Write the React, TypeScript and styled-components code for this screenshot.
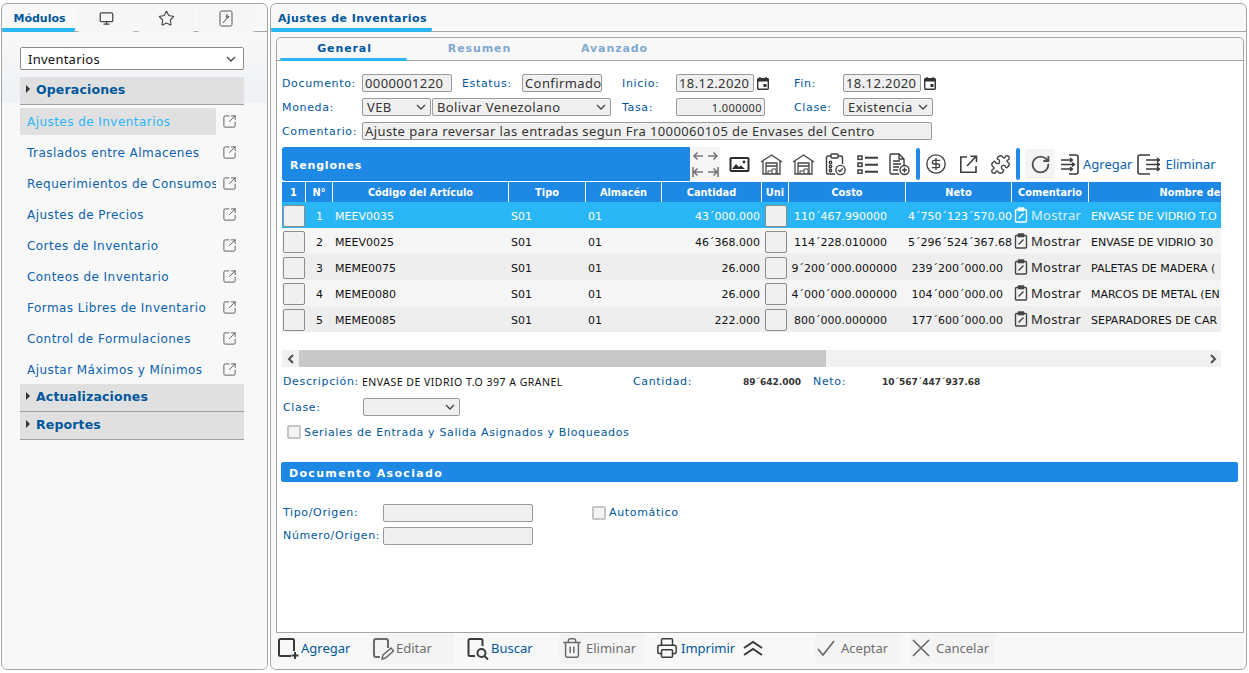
import styled, { createGlobalStyle } from 'styled-components';
import { CircleDollarSign, Monitor, Printer, Puzzle, RotateCw, SquareArrowOutUpRight, Star, Trash2 } from 'lucide-react';

const GlobalStyle = createGlobalStyle`
	html, body {
		margin: 0;
		width: 1249px;
		height: 673px;
		overflow: hidden;
		background: #ffffff;
		font-family: "DejaVu Sans", Verdana, sans-serif;
	}
	* { box-sizing: border-box; }
`;

const Page = styled.div`
	display: flex;
	gap: 2px;
	padding: 3px 1px;
	height: 673px;
`;

const Panel = styled.section<{ $width: number }>`
	display: flex;
	flex-direction: column;
	width: ${(p) => p.$width}px;
	height: 667px;
	border: 1px solid #a6a6a6;
	border-radius: 6px;
	background: #f8f8f8;
	overflow: hidden;
`;

const TabBar = styled.div`
	display: flex;
	flex: none;
	height: 28px;
	border-bottom: 1px solid #a6a6a6;
`;

const PanelTab = styled.div<{ $width: number; $active?: boolean; $spacing?: number }>`
	display: flex;
	align-items: center;
	justify-content: center;
	width: ${(p) => p.$width}px;
	height: 28px;
	padding: 4px 0 0 ${(p) => (p.$active ? 2 : 0)}px;
	margin-right: 2px;
	font-size: 11px;
	font-weight: 700;
	letter-spacing: ${(p) => p.$spacing ?? 0}px;
	color: #01579b;
	border-bottom: 4px solid ${(p) => (p.$active ? '#29b6f6' : 'transparent')};
	border-radius: 0 0 3px 3px;
	background: ${(p) => (p.$active ? 'transparent' : '#f6f6f6')};
`;

const SideBody = styled.div`
	flex: 1;
	padding: 15px 23px 0 18px;
	background: linear-gradient(#f8f8f8 0, #eef2f6 70px, #f8f8f8 71px);
`;

const ModuleSelect = styled.div`
	display: flex;
	align-items: center;
	justify-content: space-between;
	height: 23px;
	padding: 0 7px 0 7px;
	margin-bottom: 7px;
	background: #ffffff;
	border: 1px solid #8a8a8a;
	border-radius: 2px;
	font-family: "Noto Sans", sans-serif;
	font-size: 13px;
	letter-spacing: 0.25px;
	color: #111111;
`;

const GroupHeader = styled.div`
	display: flex;
	align-items: center;
	gap: 6px;
	height: 28px;
	padding: 0 0 3px 6px;
	background: #e0e0e0;
	border-bottom: 1px solid #a0a0a0;
	font-size: 12.5px;
	font-weight: 700;
	letter-spacing: 0.15px;
	color: #01579b;
`;

const Caret = styled.span`
	width: 0;
	height: 0;
	border-left: 4px solid #333333;
	border-top: 4px solid transparent;
	border-bottom: 4px solid transparent;
`;

const MenuList = styled.div`
	display: flex;
	flex-direction: column;
	gap: 4px;
	padding: 3px 0 1px;
`;

const MenuRow = styled.div`
	display: flex;
	align-items: center;
	height: 27px;
	color: #5b5b5b;
`;

const MenuLabel = styled.div<{ $active?: boolean }>`
	width: 196px;
	height: 27px;
	padding-left: 7px;
	margin-right: 6px;
	line-height: 29px;
	font-size: 12px;
	letter-spacing: 0.45px;
	white-space: nowrap;
	overflow: hidden;
	border-radius: 2px;
	color: ${(p) => (p.$active ? '#29b6f6' : '#0b62ad')};
	background: ${(p) => (p.$active ? '#e0e0e0' : 'transparent')};
`;

const MainBody = styled.div`
	flex: 1;
	display: flex;
	flex-direction: column;
	padding: 5px 2px 0 5px;
	min-height: 0;
`;

const Sheet = styled.div`
	flex: none;
	height: 596px;
	background: #ffffff;
	border: 1px solid #a6a6a6;
	border-radius: 5px 5px 0 0;
`;

const SheetTabs = styled.div`
	display: flex;
	height: 23px;
	padding-left: 3px;
	border-bottom: 1px solid #a6a6a6;
	background: #f8f8f8;
	border-radius: 5px 5px 0 0;
`;

const SheetTab = styled.div<{ $active?: boolean }>`
	display: flex;
	align-items: center;
	justify-content: center;
	width: 127px;
	height: 23px;
	margin-right: 8px;
	padding: 1px 0 0 2px;
	font-size: 11px;
	font-weight: 700;
	letter-spacing: 0.9px;
	color: ${(p) => (p.$active ? '#01579b' : '#7fa8cf')};
	border-bottom: 3px solid ${(p) => (p.$active ? '#29b6f6' : 'transparent')};
	border-radius: 0 0 3px 3px;
`;

const SheetContent = styled.div`
	padding: 10px 4px 0 5px;
`;

const FormRow = styled.div`
	display: grid;
	grid-template-columns: 80px 100px 60px 100px 54px 118px 49px 100px;
	align-items: center;
	height: 24px;
`;

const FieldLabel = styled.span`
	font-size: 11px;
	letter-spacing: 0.65px;
	color: #01579b;
	white-space: nowrap;
`;

const TextField = styled.div<{ $width: number; $right?: boolean; $small?: boolean }>`
	display: flex;
	align-items: center;
	justify-content: ${(p) => (p.$right ? 'flex-end' : 'flex-start')};
	width: ${(p) => p.$width}px;
	height: 18px;
	padding: 0 2px;
	background: #f0f0f0;
	border: 1px solid #9a9a9a;
	border-radius: 2px;
	font-family: "Noto Sans", sans-serif;
	font-size: ${(p) => (p.$small ? 11 : 13)}px;
	letter-spacing: 0.4px;
	color: #333333;
	white-space: nowrap;
	overflow: hidden;
`;

const SelectField = styled(TextField)`
	justify-content: space-between;
	padding: 0 4px;
	color: #333333;
`;

const DateCell = styled.div`
	display: flex;
	align-items: center;
	gap: 2px;
`;

const SpanCell = styled.div<{ $span: number }>`
	display: flex;
	gap: 1px;
	grid-column: span ${(p) => p.$span};
`;

const BandRow = styled.div`
	display: flex;
	align-items: stretch;
	height: 34px;
	margin-top: 4px;
`;

const Band = styled.div`
	display: flex;
	align-items: center;
	width: 408px;
	padding: 2px 0 0 8px;
	background: #1e88e5;
	border-radius: 3px 0 0 3px;
	font-size: 11px;
	font-weight: 700;
	letter-spacing: 0.8px;
	color: #ffffff;
`;

const ArrowPad = styled.div`
	display: grid;
	grid-template-columns: 15px 15px;
	grid-template-rows: 16px 16px;
	place-items: center;
	align-content: center;
	width: 30px;
	background: #f5f5f5;
	color: #777777;
	margin-right: 3px;
`;

const ToolIcon = styled.div<{ $hover?: boolean; $width?: number; $left?: number }>`
	display: flex;
	align-items: center;
	justify-content: center;
	width: ${(p) => p.$width ?? 32}px;
	height: 30px;
	margin: 2px 0 0 ${(p) => p.$left ?? 0}px;
	color: #424242;
	background: ${(p) => (p.$hover ? '#f4f4f4' : 'transparent')};
`;

const ToolSep = styled.div`
	width: 4px;
	margin: 1px 0;
	background: #1e88e5;
	border-radius: 2px;
`;

const ToolText = styled.span`
	align-self: center;
	font-family: "Noto Sans", sans-serif;
	font-size: 13px;
	color: #0b62ad;
`;

const TableClip = styled.div`
	width: 939px;
	margin-top: 1px;
	overflow: hidden;
`;

const Grid = styled.table`
	width: 1060px;
	table-layout: fixed;
	border-collapse: separate;
	border-spacing: 0;
`;

const HeadCell = styled.th`
	height: 20px;
	padding: 0;
	background: #1e88e5;
	border-right: 1px solid #ffffff;
	font-size: 9.8px;
	font-weight: 700;
	color: #ffffff;
	white-space: nowrap;
	overflow: hidden;
`;

const Row = styled.tr<{ $bg: string; $selected?: boolean }>`
	background: ${(p) => p.$bg};
	color: ${(p) => (p.$selected ? '#ffffff' : '#111111')};
`;

const Cell = styled.td<{ $align?: string; $padRight?: number; $padLeft?: number }>`
	height: 26px;
	padding: 2px ${(p) => p.$padRight ?? 2}px 0 ${(p) => p.$padLeft ?? 2}px;
	text-align: ${(p) => p.$align ?? 'left'};
	font-size: 11px;
	white-space: nowrap;
	overflow: hidden;
`;

const SquareButton = styled.div<{ $width: number }>`
	width: ${(p) => p.$width}px;
	height: 22px;
	margin: -1px auto 0;
	background: #f0f0f0;
	border: 1px solid #8c8c8c;
	border-radius: 2px;
`;

const NoteCell = styled.div<{ $selected?: boolean }>`
	display: flex;
	align-items: center;
	gap: 3px;
	margin-top: -2px;
	font-family: "Noto Sans", sans-serif;
	font-size: 13px;
	letter-spacing: 0.25px;
	color: ${(p) => (p.$selected ? '#d9f1fd' : '#222222')};
`;

const ScrollBar = styled.div`
	display: flex;
	width: 939px;
	height: 17px;
	margin-top: 18px;
	background: #f1f1f1;
	color: #505050;
`;

const ScrollEnd = styled.div`
	display: flex;
	align-items: center;
	justify-content: center;
	width: 17px;
`;

const ScrollThumb = styled.div`
	width: 527px;
	background: #c8c8c8;
`;

const ScrollRest = styled.div`
	flex: 1;
`;

const SummaryRow = styled.div`
	display: grid;
	grid-template-columns: 79px 271px 110px 70px 69px 1fr;
	align-items: center;
	height: 27px;
	margin-top: 1px;
	padding-left: 1px;
`;

const SummaryText = styled.span`
	font-family: "Noto Sans", sans-serif;
	font-size: 10.5px;
	letter-spacing: 0.5px;
	color: #111111;
	white-space: nowrap;
`;

const SummaryNumber = styled.span`
	font-size: 9px;
	font-weight: 700;
	color: #333333;
	white-space: nowrap;
`;

const RightNumber = styled(SummaryNumber)`
	text-align: right;
	margin-right: 18px;
`;

const ClassRow = styled.div`
	display: grid;
	grid-template-columns: 80px 1fr;
	align-items: center;
	height: 24px;
	padding-left: 1px;
`;

const CheckRow = styled.label<{ $left: number; $top?: number }>`
	display: flex;
	align-items: center;
	gap: 3px;
	margin: ${(p) => p.$top ?? 0}px 0 0 ${(p) => p.$left}px;
`;

const CheckBox = styled.span`
	width: 14px;
	height: 14px;
	background: #f4f4f4;
	border: 2px solid #c6c6c6;
	border-radius: 2px;
`;

const SectionBand = styled.div`
	display: flex;
	align-items: center;
	width: 957px;
	height: 20px;
	margin: 23px 0 0 -1px;
	padding: 3px 0 0 8px;
	background: #1e88e5;
	border-radius: 2px;
	font-size: 11px;
	font-weight: 700;
	letter-spacing: 1.33px;
	color: #ffffff;
`;

const OriginGrid = styled.div`
	display: grid;
	grid-template-columns: 100px 209px auto;
	grid-auto-rows: 23px;
	align-items: center;
	margin-top: 19px;
	padding-left: 1px;
`;

const Footer = styled.div`
	flex: 1;
	display: flex;
	align-items: flex-start;
	padding-top: 1px;
`;

const FootButton = styled.div<{ $width: number; $disabled?: boolean; $gap?: number }>`
	display: flex;
	align-items: center;
	gap: ${(p) => p.$gap ?? 2}px;
	width: ${(p) => p.$width}px;
	height: 30px;
	padding: 0 0 2px 2px;
	border-radius: 2px;
	font-family: "Noto Sans", sans-serif;
	font-size: 13px;
	color: ${(p) => (p.$disabled ? '#6e6e6e' : '#01579b')};
	background: ${(p) => (p.$disabled ? '#f4f4f4' : 'transparent')};
	svg { color: ${(p) => (p.$disabled ? '#6a6a6a' : '#3a3a3a')}; flex: none; }
`;

const FootSpacer = styled.div<{ $width: number }>`
	flex: none;
	width: ${(p) => p.$width}px;
`;

const CalendarIcon = () => (
	<svg width="14" height="15" viewBox="0 0 14 15" fill="none">
		<rect x="1.7" y="2.7" width="10.6" height="10.6" rx="1" stroke="#333" strokeWidth="1.4" />
		<path d="M1.5 2.5h11v3h-11z" fill="#333" />
		<path d="M4 1v2M10 1v2" stroke="#333" strokeWidth="1.4" />
		<rect x="7.5" y="8" width="3" height="3" fill="#333" />
	</svg>
);

const Chevron = () => (
	<svg width="10" height="6" viewBox="0 0 10 6" fill="none">
		<path d="M1 1l4 4 4-4" stroke="#444" strokeWidth="1.3" />
	</svg>
);

const WrenchBox = () => (
	<svg width="14" height="17" viewBox="0 0 14 17" fill="none" stroke="#555" strokeWidth="1">
		<rect x="1" y="1" width="12" height="15" rx="1.5" />
		<path d="M4 13l4-5M8 8a2 2 0 0 1 .5-3.5L7.6 6l1 1 1.4-1A2 2 0 0 1 8 8z" />
	</svg>
);

const ImageIcon = () => (
	<svg width="21" height="17" viewBox="0 0 21 17">
		<rect x="0.5" y="1" width="20" height="15" rx="2" fill="#2b2b2b" />
		<rect x="2.5" y="3" width="16" height="11" fill="#ffffff" />
		<path d="M3 13l4-5 3 3 2-1.5 4 3.5z" fill="#2b2b2b" />
		<circle cx="15" cy="6" r="1.4" fill="#2b2b2b" />
	</svg>
);

const WarehouseIcon = () => (
	<svg width="23" height="21" viewBox="0 0 23 21" fill="none" stroke="#444" strokeWidth="1.3">
		<path d="M1 8l10.5-7L22 8" />
		<path d="M3 7v13h17V7" />
		<path d="M6 20V9h11v11M6 12h11" />
		<path d="M12 20v-5h4v5M8 20v-3h4" strokeWidth="1" />
	</svg>
);

const ClipboardIcon = () => (
	<svg width="21" height="23" viewBox="0 0 21 23" fill="none" stroke="#3c3c3c" strokeWidth="1.4">
		<path d="M6 3H3a1.5 1.5 0 0 0-1.5 1.5v15A1.5 1.5 0 0 0 3 21h7M13 3h3a1.5 1.5 0 0 1 1.5 1.5V11" />
		<rect x="6" y="1" width="7" height="4" rx="1" />
		<circle cx="5.5" cy="9.5" r="1.2" />
		<circle cx="5.5" cy="13.5" r="1.2" />
		<circle cx="5.5" cy="17.5" r="1.2" />
		<circle cx="15.5" cy="17" r="4.6" />
		<path d="M13.3 17l1.6 1.6 2.8-3" />
	</svg>
);

const ListIcon = () => (
	<svg width="21" height="19" viewBox="0 0 21 19" fill="none" stroke="#3c3c3c" strokeWidth="1.5">
		<rect x="1" y="1" width="4" height="3.4" />
		<rect x="1" y="8" width="4" height="3.4" />
		<rect x="1" y="15" width="4" height="3.4" />
		<path d="M8 2.7h13M8 9.7h13M8 16.7h13" strokeWidth="2" />
	</svg>
);

const FilePlusIcon = () => (
	<svg width="21" height="23" viewBox="0 0 21 23" fill="none" stroke="#3c3c3c" strokeWidth="1.4">
		<path d="M10 21H2.5A1.5 1.5 0 0 1 1 19.5v-17A1.5 1.5 0 0 1 2.5 1H10l5 5v6" />
		<path d="M10 1v5h5M4 8h7M4 11h8M4 14h6M4 17h5" />
		<circle cx="15.5" cy="17" r="4.5" />
		<path d="M15.5 14.5v5M13 17h5" />
	</svg>
);

const ExternalIcon = () => (
	<svg width="19" height="19" viewBox="0 0 19 19" fill="none" stroke="#3c3c3c" strokeWidth="1.6">
		<path d="M8 2H1.8v15.2H17V11" />
		<path d="M8 11l9-9.5M11.5 1.2h6v6" />
	</svg>
);

const LoginIcon = () => (
	<svg width="19" height="21" viewBox="0 0 19 21" fill="none" stroke="#3a3a3a" strokeWidth="1.6">
		<path d="M9 1h7a2 2 0 0 1 2 2v15a2 2 0 0 1-2 2H9" />
		<path d="M1 6h11M1 10.5h13M1 15h11M10 4l2.5 2L10 8M12 8.5l2.5 2-2.5 2M10 13l2.5 2-2.5 2" strokeWidth="1.4" />
	</svg>
);

const LogoutIcon = () => (
	<svg width="23" height="21" viewBox="0 0 23 21" fill="none" stroke="#3a3a3a" strokeWidth="1.6">
		<path d="M13 1H3a2 2 0 0 0-2 2v15a2 2 0 0 0 2 2h10" />
		<path d="M9 6h13M9 10.5h13M9 15h13M20 4l2.500 2L20 8M20 8.500l2.500 2-2.500 2M20 13l2.500 2-2.500 2" strokeWidth="1.400" />
	</svg>
);

const ArrowGlyph = ({ d }: { d: string }) => (
	<svg width="14" height="14" viewBox="0 0 14 14" fill="none" stroke="currentColor" strokeWidth="1.6">
		<path d={d} />
	</svg>
);

const AddPageIcon = () => (
	<svg width="23" height="24" viewBox="0 0 23 24" fill="none" stroke="currentColor" strokeWidth="2">
		<path d="M13 20H2.500A1.500 1.500 0 0 1 1 18.500V4.500A1.500 1.500 0 0 1 2.500 3h12A1.500 1.500 0 0 1 16 4.500V15" />
		<path d="M17 16v7M13.500 19.500h7" />
	</svg>
);

const EditPageIcon = () => (
	<svg width="24" height="24" viewBox="0 0 24 24" fill="none" stroke="currentColor" strokeWidth="2">
		<path d="M9 21H5a2 2 0 0 1-2-2V5a2 2 0 0 1 2-2h10a2 2 0 0 1 2 2v7" />
		<path d="M11 23l1-4 8-7 2.500 3-8 7z" strokeWidth="1.500" />
	</svg>
);

const SearchPageIcon = () => (
	<svg width="24" height="24" viewBox="0 0 24 24" fill="none" stroke="currentColor" strokeWidth="2">
		<path d="M9 20H4a1.500 1.500 0 0 1-1.500-1.500v-14A1.500 1.500 0 0 1 4 3h11a1.500 1.500 0 0 1 1.500 1.500V10" />
		<circle cx="15.500" cy="17" r="4" />
		<path d="M18.500 20l3.500 3.500" />
	</svg>
);

const NoteIcon = ({ color }: { color: string }) => (
	<svg width="14" height="16" viewBox="0 0 14 16" fill="none" stroke={color} strokeWidth="1.400">
		<rect x="1.500" y="2.500" width="11" height="12.500" rx="1" />
		<rect x="4.500" y="1" width="5" height="2.600" fill={color} />
		<path d="M4.500 11.500l5-5" />
	</svg>
);

const CollapseIcon = () => (
	<svg width="20" height="16" viewBox="0 0 20 16" fill="none" stroke="currentColor" strokeWidth="2">
		<path d="M1 8l9-6 9 6M1 15l9-6 9 6" />
	</svg>
);

const AcceptIcon = () => (
	<svg width="18" height="16" viewBox="0 0 18 16" fill="none" stroke="currentColor" strokeWidth="1.7">
		<path d="M1 9l5 6L17 1" />
	</svg>
);

const CancelIcon = () => (
	<svg width="18" height="18" viewBox="0 0 18 18" fill="none" stroke="currentColor" strokeWidth="1.7">
		<path d="M1 1l16 16M17 1L1 17" />
	</svg>
);

const menuItems = ['Ajustes de Inventarios', 'Traslados entre Almacenes', 'Requerimientos de Consumos', 'Ajustes de Precios', 'Cortes de Inventario', 'Conteos de Inventario', 'Formas Libres de Inventario', 'Control de Formulaciones', 'Ajustar Máximos y Mínimos'];

const columns: { title: string; width: number }[] = [
	{ title: '1', width: 24 },
	{ title: 'N°', width: 27 },
	{ title: 'Código del Artículo', width: 176 },
	{ title: 'Tipo', width: 77 },
	{ title: 'Almacén', width: 76 },
	{ title: 'Cantidad', width: 100 },
	{ title: 'Uni', width: 27 },
	{ title: 'Costo', width: 117 },
	{ title: 'Neto', width: 106 },
	{ title: 'Comentario', width: 77 },
	{ title: 'Nombre del Artículo', width: 253 }
];

const rows = [
	{ id: 1, code: 'MEEV0035', qty: '43´000.000', cost: '110´467.990000', costPad: 19, net: '4´750´123´570.00', netPad: 0, name: 'ENVASE DE VIDRIO T.O 397 A GRANEL', bg: '#29b6f6' },
	{ id: 2, code: 'MEEV0025', qty: '46´368.000', cost: '114´228.010000', costPad: 19, net: '5´296´524´367.68', netPad: 0, name: 'ENVASE DE VIDRIO 30', bg: '#f5f5f5' },
	{ id: 3, code: 'MEME0075', qty: '26.000', cost: '9´200´000.000000', costPad: 9, net: '239´200´000.00', netPad: 9, name: 'PALETAS DE MADERA (', bg: '#eeeeee' },
	{ id: 4, code: 'MEME0080', qty: '26.000', cost: '4´000´000.000000', costPad: 9, net: '104´000´000.00', netPad: 9, name: 'MARCOS DE METAL (EN', bg: '#f5f5f5' },
	{ id: 5, code: 'MEME0085', qty: '222.000', cost: '800´000.000000', costPad: 19, net: '177´600´000.00', netPad: 9, name: 'SEPARADORES DE CAR', bg: '#eeeeee' }
];

const App = () => (
	<Page>
		<GlobalStyle />
		<Panel $width={267}>
			<TabBar>
				<PanelTab $width={73} $active>Módulos</PanelTab>
				<PanelTab $width={58}><Monitor size={15} color="#444" strokeWidth={2} /></PanelTab>
				<PanelTab $width={58}><Star size={17} color="#444" strokeWidth={1.6} /></PanelTab>
				<PanelTab $width={58}><WrenchBox /></PanelTab>
			</TabBar>
			<SideBody>
				<ModuleSelect>Inventarios<Chevron /></ModuleSelect>
				<GroupHeader><Caret />Operaciones</GroupHeader>
				<MenuList>
					{menuItems.map((item, i) => (
						<MenuRow key={item}>
							<MenuLabel $active={i === 0}>{item}</MenuLabel>
							<SquareArrowOutUpRight size={15} strokeWidth={1.5} />
						</MenuRow>
					))}
				</MenuList>
				<GroupHeader><Caret />Actualizaciones</GroupHeader>
				<GroupHeader><Caret />Reportes</GroupHeader>
			</SideBody>
		</Panel>
		<Panel $width={977}>
			<TabBar>
				<PanelTab $width={161} $active $spacing={0.45}>Ajustes de Inventarios</PanelTab>
			</TabBar>
			<MainBody>
				<Sheet>
					<SheetTabs>
						<SheetTab $active>General</SheetTab>
						<SheetTab>Resumen</SheetTab>
						<SheetTab>Avanzado</SheetTab>
					</SheetTabs>
					<SheetContent>
						<FormRow>
							<FieldLabel>Documento:</FieldLabel>
							<TextField $width={90}>0000001220</TextField>
							<FieldLabel>Estatus:</FieldLabel>
							<TextField $width={80}>Confirmado</TextField>
							<FieldLabel>Inicio:</FieldLabel>
							<DateCell><TextField $width={78}>18.12.2020</TextField><CalendarIcon /></DateCell>
							<FieldLabel>Fin:</FieldLabel>
							<DateCell><TextField $width={78}>18.12.2020</TextField><CalendarIcon /></DateCell>
						</FormRow>
						<FormRow>
							<FieldLabel>Moneda:</FieldLabel>
							<SpanCell $span={3}>
								<SelectField $width={69}>VEB<Chevron /></SelectField>
								<SelectField $width={179}>Bolivar Venezolano<Chevron /></SelectField>
							</SpanCell>
							<FieldLabel>Tasa:</FieldLabel>
							<TextField $width={89} $right $small>1.000000</TextField>
							<FieldLabel>Clase:</FieldLabel>
							<SelectField $width={90}>Existencia<Chevron /></SelectField>
						</FormRow>
						<FormRow>
							<FieldLabel>Comentario:</FieldLabel>
							<SpanCell $span={7}>
								<TextField $width={570}>Ajuste para reversar las entradas segun Fra 1000060105 de Envases del Centro</TextField>
							</SpanCell>
						</FormRow>
						<BandRow>
							<Band>Renglones</Band>
							<ArrowPad>
								<ArrowGlyph d="M12 7H3M6.5 3.5L3 7l3.500 3.500" />
								<ArrowGlyph d="M2 7h9M7.500 3.500L11 7l-3.500 3.500" />
								<ArrowGlyph d="M2 2v10M12 7H3M6.500 3.500L3 7l3.500 3.500" />
								<ArrowGlyph d="M12 2v10M2 7h9M7.500 3.500L11 7l-3.500 3.500" />
							</ArrowPad>
							<ToolIcon><ImageIcon /></ToolIcon>
							<ToolIcon><WarehouseIcon /></ToolIcon>
							<ToolIcon><WarehouseIcon /></ToolIcon>
							<ToolIcon><ClipboardIcon /></ToolIcon>
							<ToolIcon><ListIcon /></ToolIcon>
							<ToolIcon $width={33}><FilePlusIcon /></ToolIcon>
							<ToolSep />
							<ToolIcon><CircleDollarSign size={22} strokeWidth={1.5} /></ToolIcon>
							<ToolIcon><ExternalIcon /></ToolIcon>
							<ToolIcon><Puzzle size={21} strokeWidth={1.6} /></ToolIcon>
							<ToolSep />
							<ToolIcon $hover $width={30} $left={5}><RotateCw size={21} strokeWidth={2.2} color="#555" /></ToolIcon>
							<ToolIcon $width={28}><LoginIcon /></ToolIcon>
							<ToolText>Agregar</ToolText>
							<ToolIcon $width={33}><LogoutIcon /></ToolIcon>
							<ToolText>Eliminar</ToolText>
						</BandRow>
						<TableClip>
							<Grid>
								<colgroup>
									{columns.map((c) => <col key={c.title} width={c.width} />)}
								</colgroup>
								<thead>
									<tr>
										{columns.map((c) => <HeadCell key={c.title}>{c.title}</HeadCell>)}
									</tr>
								</thead>
								<tbody>
									{rows.map((r, i) => (
										<Row key={r.id} $bg={r.bg} $selected={i === 0}>
											<Cell $padLeft={1} $padRight={1}><SquareButton $width={22} /></Cell>
											<Cell $align="center">{r.id}</Cell>
											<Cell>{r.code}</Cell>
											<Cell>S01</Cell>
											<Cell>01</Cell>
											<Cell $align="right">{r.qty}</Cell>
											<Cell><SquareButton $width={22} /></Cell>
											<Cell $align="right" $padRight={r.costPad}>{r.cost}</Cell>
											<Cell $align="right" $padRight={r.netPad}>{r.net}</Cell>
											<Cell>
												<NoteCell $selected={i === 0}>
													<NoteIcon color={i === 0 ? '#ffffff' : '#444444'} />Mostrar
												</NoteCell>
											</Cell>
											<Cell>{r.name}</Cell>
										</Row>
									))}
								</tbody>
							</Grid>
						</TableClip>
						<ScrollBar>
							<ScrollEnd><svg width="8" height="10" viewBox="0 0 8 10" fill="none" stroke="currentColor" strokeWidth="2"><path d="M6 1L2 5l4 4" /></svg></ScrollEnd>
							<ScrollThumb />
							<ScrollRest />
							<ScrollEnd><svg width="8" height="10" viewBox="0 0 8 10" fill="none" stroke="currentColor" strokeWidth="2"><path d="M2 1l4 4-4 4" /></svg></ScrollEnd>
						</ScrollBar>
						<SummaryRow>
							<FieldLabel>Descripción:</FieldLabel>
							<SummaryText>ENVASE DE VIDRIO T.O 397 A GRANEL</SummaryText>
							<FieldLabel>Cantidad:</FieldLabel>
							<RightNumber>89´642.000</RightNumber>
							<FieldLabel>Neto:</FieldLabel>
							<SummaryNumber>10´567´447´937.68</SummaryNumber>
						</SummaryRow>
						<ClassRow>
							<FieldLabel>Clase:</FieldLabel>
							<SelectField $width={97}><span /><Chevron /></SelectField>
						</ClassRow>
						<CheckRow $left={5} $top={6}>
							<CheckBox />
							<FieldLabel>Seriales de Entrada y Salida Asignados y Bloqueados</FieldLabel>
						</CheckRow>
						<SectionBand>Documento Asociado</SectionBand>
						<OriginGrid>
							<FieldLabel>Tipo/Origen:</FieldLabel>
							<TextField $width={150} />
							<CheckRow $left={0}>
								<CheckBox />
								<FieldLabel>Automático</FieldLabel>
							</CheckRow>
							<FieldLabel>Número/Origen:</FieldLabel>
							<TextField $width={150} />
						</OriginGrid>
					</SheetContent>
				</Sheet>
				<Footer>
					<FootButton $width={93} $gap={0}><AddPageIcon />Agregar</FootButton>
					<FootButton $width={85} $disabled $gap={1}><EditPageIcon />Editar</FootButton>
					<FootSpacer $width={10} />
					<FootButton $width={95} $gap={1}><SearchPageIcon />Buscar</FootButton>
					<FootButton $width={85} $disabled $gap={3}><Trash2 size={22} strokeWidth={1.6} />Eliminar</FootButton>
					<FootSpacer $width={10} />
					<FootButton $width={87} $gap={3}><Printer size={22} strokeWidth={1.6} />Imprimir</FootButton>
					<FootButton $width={74}><CollapseIcon /></FootButton>
					<FootButton $width={85} $disabled $gap={6}><AcceptIcon />Aceptar</FootButton>
					<FootSpacer $width={10} />
					<FootButton $width={85} $disabled $gap={6}><CancelIcon />Cancelar</FootButton>
				</Footer>
			</MainBody>
		</Panel>
	</Page>
);

export default App;
